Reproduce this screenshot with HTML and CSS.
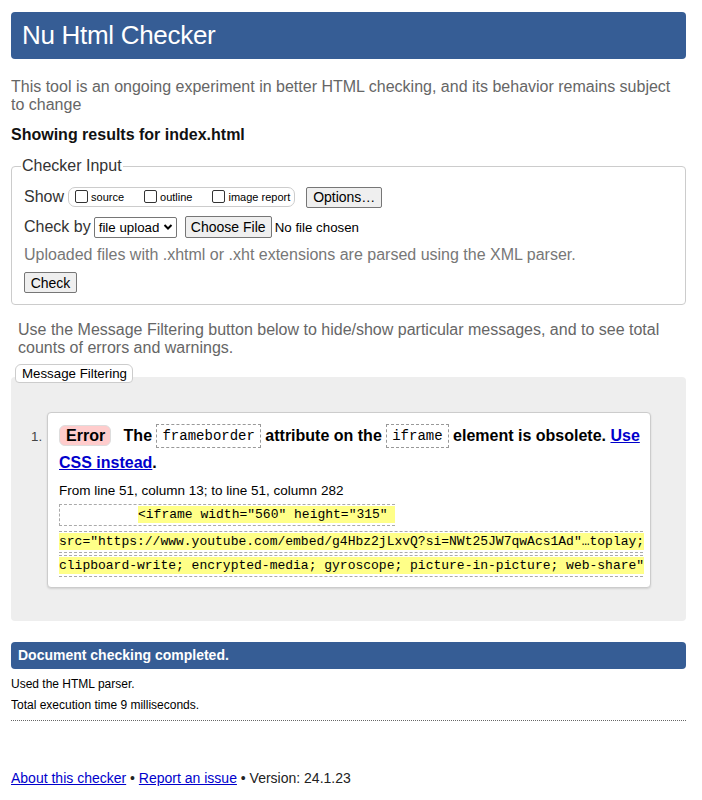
FILE: index.html
```html
<!DOCTYPE html>
<html lang="en">
<head>
<meta charset="utf-8">
<title>Nu Html Checker</title>
<link rel="stylesheet" href="styles.css">
</head>
<body>
<h1 class="title">Nu Html Checker</h1>
<p class="intro">This tool is an ongoing experiment in better HTML checking, and its behavior remains subject to change</p>
<p class="showing">Showing results for index.html</p>
<fieldset class="input">
  <legend>Checker Input</legend>
  <div class="row">
    <span class="lbl">Show</span>
    <span class="show-box">
      <label class="cb"><span class="box"></span>source</label>
      <label class="cb"><span class="box"></span>outline</label>
      <label class="cb"><span class="box"></span>image report</label>
    </span>
    <span class="btn opts">Options…</span>
  </div>
  <div class="row">
    <span class="lbl">Check by</span>
    <span class="select">file upload<svg width="10" height="8" viewBox="0 0 10 8"><path d="M1.5 2 L5 5.5 L8.5 2" fill="none" stroke="#000" stroke-width="2"/></svg></span>
    <span class="btn choose">Choose File</span>
    <span class="nofile">No file chosen</span>
  </div>
  <p class="hint">Uploaded files with .xhtml or .xht extensions are parsed using the XML parser.</p>
  <span class="btn check">Check</span>
</fieldset>
<p class="filter-note">Use the Message Filtering button below to hide/show particular messages, and to see total counts of errors and warnings.</p>
<div class="filter-tab">Message Filtering</div>
<div class="results">
  <ol class="msgs">
    <li class="msg">
      <p class="msg-text"><strong class="err">Error</strong> <span class="txt">The <code>frameborder</code> attribute on the <code>iframe</code> element is obsolete. <a href="#">Use CSS instead</a>.</span></p>
      <p class="loc">From line 51, column 13; to line 51, column 282</p>
      <div class="extract">
        <div class="ln first"><span class="pad">          </span><mark>&lt;iframe width="560" height="315" </mark></div>
        <div class="ln"><mark>src="https://www.youtube.com/embed/g4Hbz2jLxvQ?si=NWt25JW7qwAcs1Ad"…toplay;</mark></div>
        <div class="ln"><mark>clipboard-write; encrypted-media; gyroscope; picture-in-picture; web-share"</mark></div>
      </div>
    </li>
  </ol>
</div>
<div class="done">Document checking completed.</div>
<p class="stat">Used the HTML parser.</p>
<p class="stat">Total execution time 9 milliseconds.</p>
<hr class="dots">
<p class="footer"><a href="#">About this checker</a> • <a href="#">Report an issue</a> • Version: 24.1.23</p>
</body>
</html>
```

FILE: styles.css
```css
html, body {
  background: #fff;
}
body {
  margin: 12px 16px 0 11px;
  font-family: "Liberation Sans", Arial, sans-serif;
  color: #000;
  font-size: 16px;
}
.title {
  margin: 0;
  height: 47px;
  box-sizing: border-box;
  padding: 9px 11px 0;
  background: #365d95;
  color: #fff;
  font-weight: normal;
  font-size: 26px;
  line-height: 28px;
  border-radius: 4px;
  letter-spacing: -0.3px;
}
.intro {
  margin: 19px 0 0;
  color: #666;
  font-size: 16px;
  line-height: 18px;
}
.showing {
  margin: 12px 0 0;
  font-weight: bold;
  font-size: 16px;
  line-height: 18px;
  color: #111;
}
.input {
  margin: 13px 0 0;
  padding: 11px 12px 11px;
  border: 1px solid #ccc;
  border-radius: 4px;
}
.input legend {
  padding: 0 1px;
  margin-left: -3px;
  font-size: 16px;
  color: #333;
}
.row {
  display: flex;
  align-items: center;
  height: 22px;
  margin-bottom: 8px;
  color: #333;
  white-space: nowrap;
}
.lbl {
  font-size: 16px;
  margin-right: 3px;
}
.show-box {
  display: flex;
  align-items: center;
  height: 20px;
  box-sizing: border-box;
  border: 1px solid #ccc;
  border-radius: 7px;
  padding: 0 4px 0 6px;
  margin-left: 1px;
  margin-right: 11px;
}
.cb {
  display: flex;
  align-items: center;
  font-size: 11px;
  color: #000;
  margin-right: 20px;
}
.cb:last-child {
  margin-right: 0;
}
.box {
  width: 11px;
  height: 11px;
  border: 1px solid #333;
  border-radius: 2px;
  margin-right: 3px;
  margin-top: -2px;
}
.btn {
  display: inline-flex;
  align-items: center;
  justify-content: center;
  box-sizing: border-box;
  background: #efefef;
  border: 1px solid #767676;
  border-radius: 2px;
  font-size: 13.3px;
  color: #000;
  height: 21px;
  padding: 0 5px;
  white-space: nowrap;
}
.opts {
  width: 76px;
  font-size: 14px;
}
.select {
  display: inline-flex;
  align-items: center;
  box-sizing: border-box;
  height: 21px;
  width: 83px;
  border: 1px solid #767676;
  border-radius: 2px;
  padding: 0 3px 0 4px;
  font-size: 13.3px;
  color: #000;
  justify-content: space-between;
}
.choose {
  width: 87px;
  height: 22px;
  margin-left: 8px;
  font-size: 14px;
}
.nofile {
  font-size: 13.3px;
  color: #000;
  margin-left: 3px;
}
.hint {
  margin: -1px 0 0;
  color: #777;
  font-size: 16px;
  line-height: 20px;
}
.check {
  margin-top: 7px;
  width: 53px;
  font-size: 14px;
}
.filter-note {
  margin: 16px 0 0 7px;
  color: #666;
  font-size: 16px;
  line-height: 18px;
}
.filter-tab {
  position: relative;
  z-index: 1;
  display: inline-block;
  margin: 7px 0 0 4px;
  padding: 0 5px 0 6px;
  height: 19px;
  box-sizing: border-box;
  line-height: 17px;
  font-size: 13.3px;
  background: #fff;
  border: 1px solid #ccc;
  border-radius: 6px 6px 4px 4px;
}
.results {
  margin-top: -6px;
  background: #eee;
  border-radius: 4px;
  padding: 35px 35px 33px 19px;
}
.msgs {
  margin: 0;
  padding: 0;
  list-style: none;
}
.msg {
  position: relative;
  margin-left: 17px;
  background: #fff;
  border: 1px solid #ccc;
  border-radius: 4px;
  box-shadow: 0 1px 2px rgba(0,0,0,0.12);
  padding: 9px 7px 8px 11px;
}
.msg::before {
  content: "1.";
  position: absolute;
  left: -17px;
  top: 16px;
  font-size: 13.3px;
  color: #444;
}
.msg-text {
  margin: 0;
  font-size: 16px;
  font-weight: bold;
  line-height: 27px;
}
.err {
  display: inline-block;
  background: #fcc;
  border: 1px solid #ddd;
  border-radius: 6px;
  padding: 0 5px 0 6px;
  line-height: 19px;
  margin-right: 8px;
}
.txt {
  color: #000;
}
code {
  display: inline-block;
  font-family: "Liberation Mono", "DejaVu Sans Mono", monospace;
  font-weight: normal;
  font-size: 14px;
  line-height: 22px;
  padding: 0 5px;
  border: 1px dashed #999;
  vertical-align: 1px;
}
.msg-text a {
  color: #00c;
  text-decoration: underline;
}
.loc {
  margin: 6px 0 0;
  font-size: 13.5px;
  line-height: 18px;
}
.extract {
  margin-top: 4px;
  font-family: "Liberation Mono", "DejaVu Sans Mono", monospace;
  font-size: 13px;
}
.ln {
  white-space: pre;
  line-height: 18px;
  padding: 1px 0;
  border-top: 1px dashed #aaa;
  border-bottom: 1px dashed #aaa;
  margin-bottom: 2px;
}
.ln.first {
  width: fit-content;
  border-left: 1px dashed #aaa;
  margin-bottom: 5px;
}
mark {
  background: #ff8;
  color: #000;
  padding: 1px 0;
}
.done {
  margin-top: 21px;
  height: 27px;
  box-sizing: border-box;
  padding: 5px 7px 0;
  background: #365d95;
  color: #fff;
  font-weight: bold;
  font-size: 14px;
  border-radius: 4px;
}
.stat {
  margin: 8px 0 0;
  font-size: 12px;
  line-height: 14px;
}
.stat + .stat {
  margin-top: 7px;
}
.dots {
  margin: 8px 0 0;
  border: 0;
  border-top: 1px dotted #666;
  height: 0;
}
.footer {
  margin: 49px 0 0;
  font-size: 14px;
  color: #222;
}
.footer a {
  color: #00c;
}
```
